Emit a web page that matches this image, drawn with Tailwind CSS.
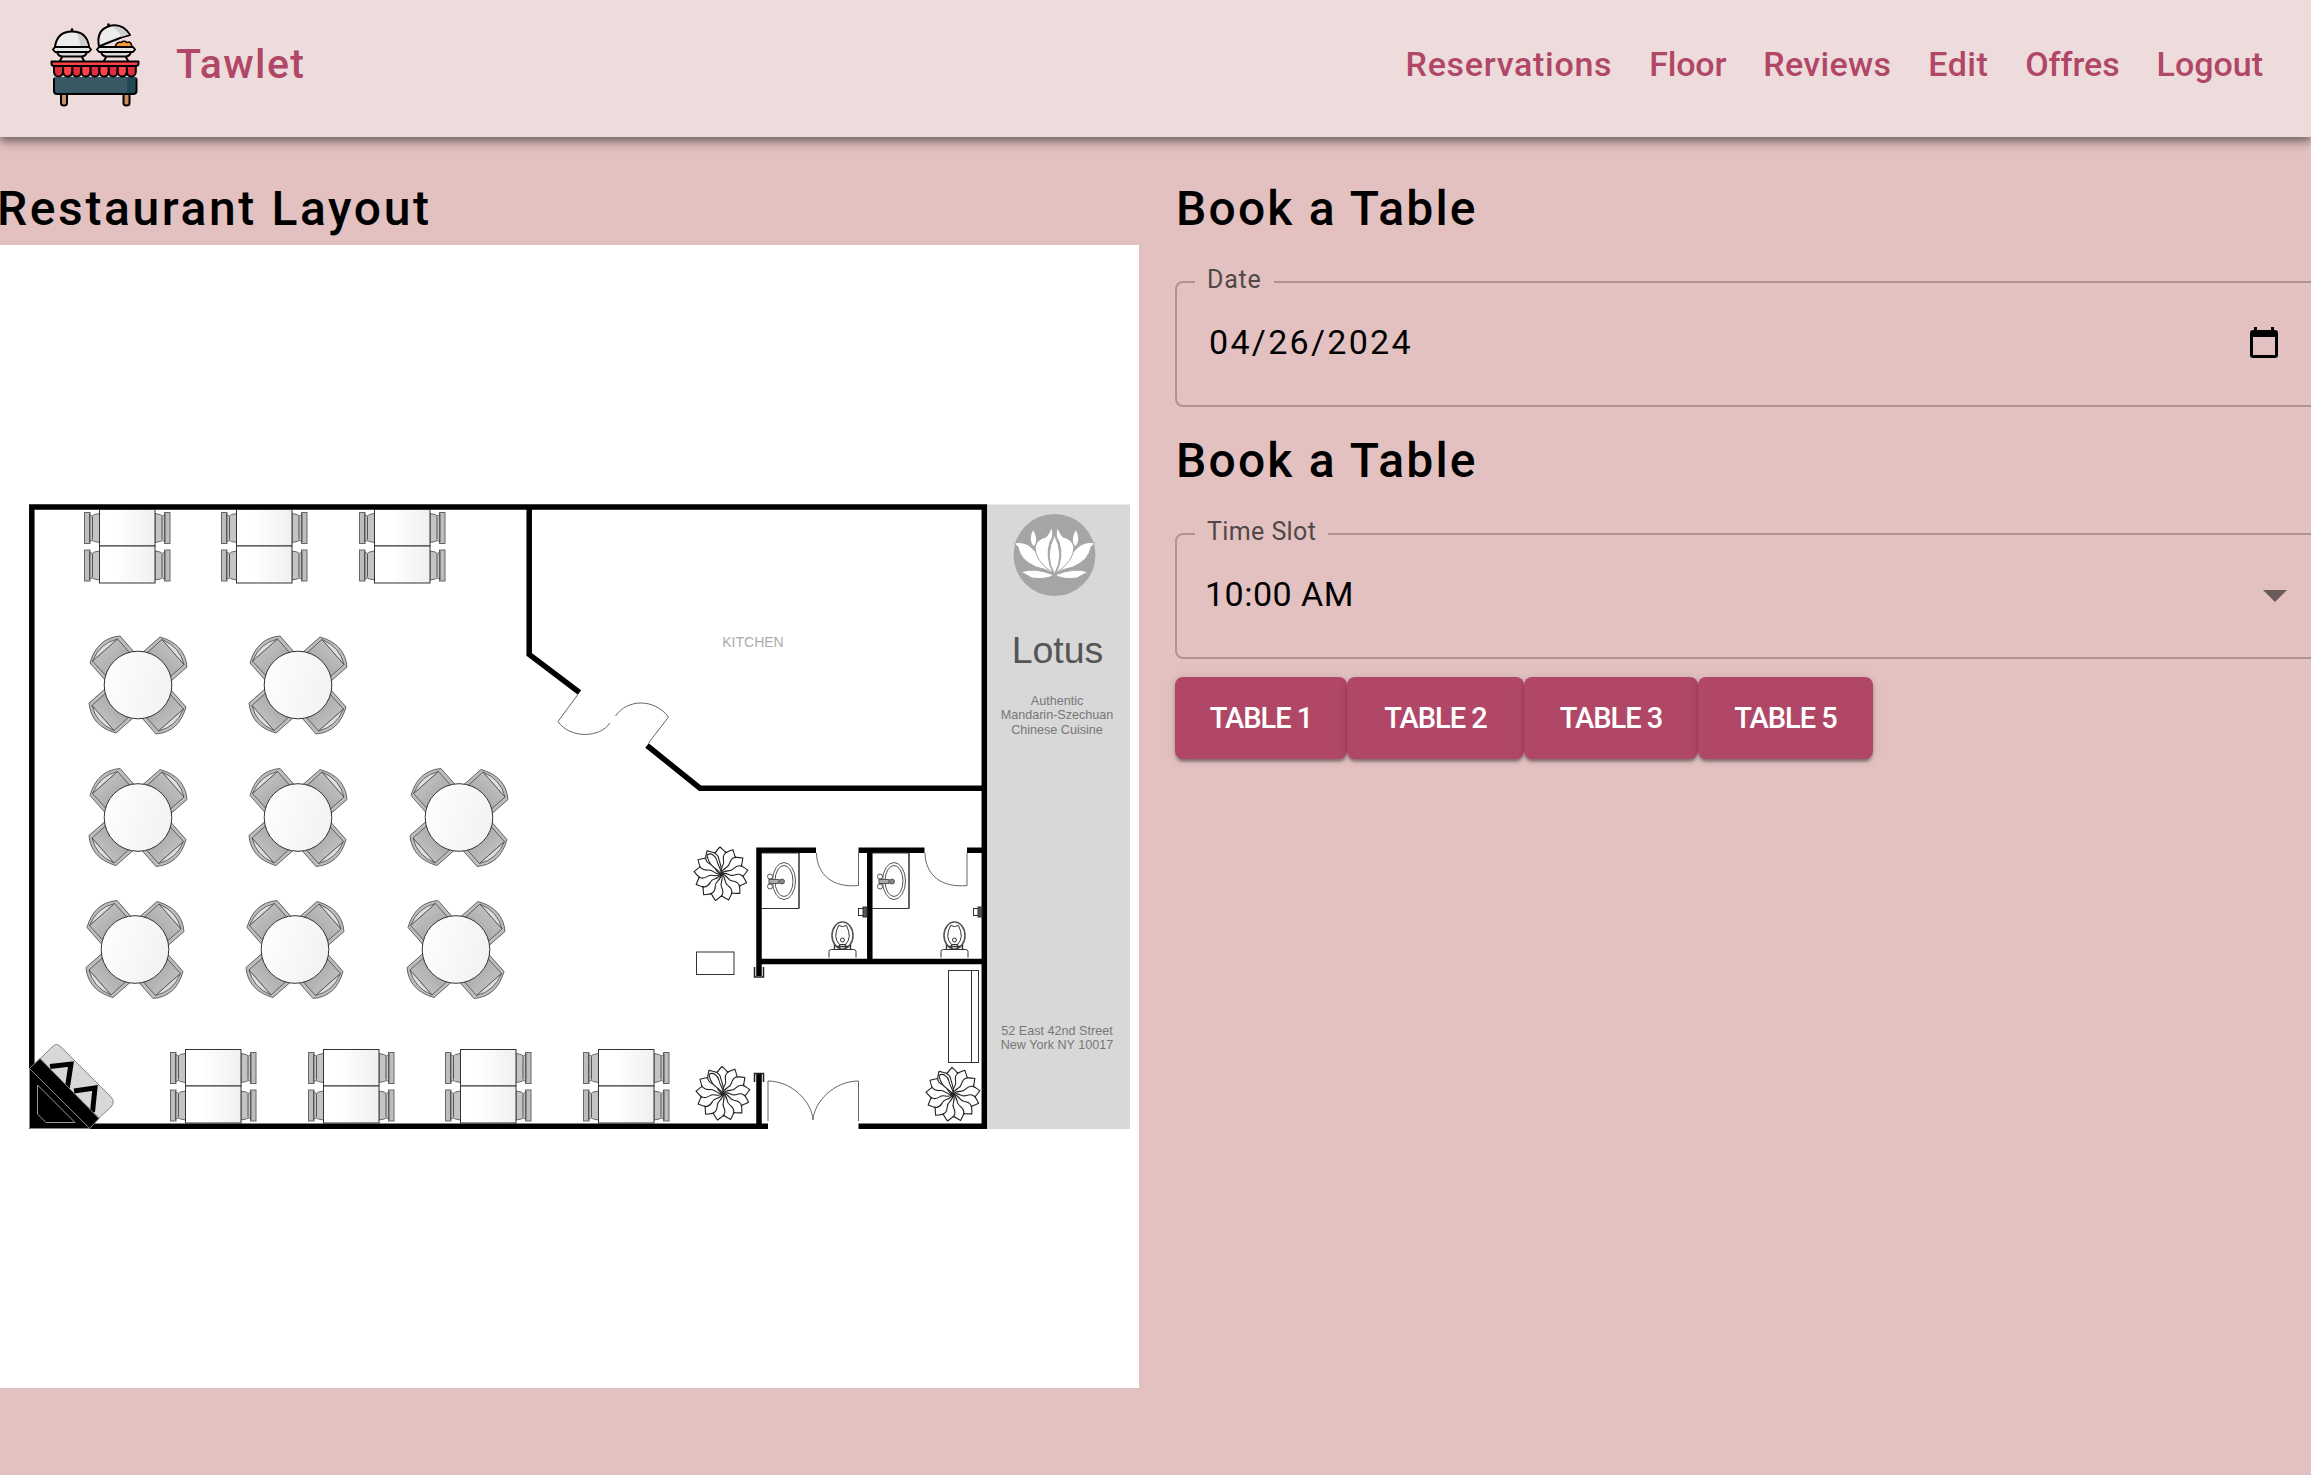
<!DOCTYPE html>
<html lang="en">
<head>
<meta charset="utf-8">
<title>Tawlet</title>
<script src="https://cdn.jsdelivr.net/npm/@tailwindcss/browser@4"></script>
</head>
<body class="flex h-screen flex-col overflow-hidden bg-[#e3c1c1] font-['Roboto',sans-serif] font-medium text-black">
<header class="relative z-10 flex h-[137px] shrink-0 items-center bg-[#eedcdc] pr-[48px] pl-[50px] text-[#b14767] shadow-[0_3px_6px_-1px_rgba(0,0,0,0.2),0_6px_8px_rgba(0,0,0,0.24),0_2px_15px_rgba(0,0,0,0.2)]">
  <svg class="-mt-[7px] h-[90px] w-[90px] shrink-0" viewBox="50 20 90 90" fill="none" stroke="#000" stroke-width="2" stroke-linejoin="round" stroke-linecap="round">
    <path d="M72 29.500v2" stroke-width="2.500"/>
    <path d="M55 47Q57 31.500 72 31.500T89 47z" fill="#ececec"/>
    <path d="M76 33Q80 39 80 46H88Q86 35 76 33z" fill="#cfcfcf" stroke="none"/>
    <path d="M53 49.500L55 47H89L91 49.500L89 52H55z" fill="#e6e6e6"/>
    <path d="M57 52Q58 56 62 56.500H82Q86 56 87 52z" fill="#dcdcdc"/>
    <path d="M62 57L60 61M82 57L84 61"/>
    <path d="M108.500 24.500v2.500" stroke-width="2.500"/>
    <path d="M115 47Q117 41 121 42.500Q124 40 127 42.500Q131 40.500 132 47z" fill="#ff9838" stroke-width="1.500"/>
    <path d="M99 46.500Q96 31 108 26.500Q122 22 130 35Q121 37 115 40Q107 43 99 46.500z" fill="#ececec"/>
    <path d="M113 27Q120 32 121 37L129 34.500Q123 26 113 27z" fill="#cfcfcf" stroke="none"/>
    <path d="M97 49.500L99 47H133L135 49.500L133 52H99z" fill="#e6e6e6"/>
    <path d="M101 52Q102 56 106 56.500H126Q130 56 131 52z" fill="#dcdcdc"/>
    <path d="M106 57L104 61M126 57L128 61"/>
    <path d="M61 94V103Q61 105.500 64 105.500T67 103V94zM123.500 94V103Q123.500 105.500 126.500 105.500T129.500 103V94z" fill="#c98e62"/>
    <path d="M54 77V91Q54 94 57 94H133Q136.500 94 136.500 91V77z" fill="#385963" stroke="none"/>
    <path d="M127 77H135.500V90Q135.500 93 133 93H127z" fill="#1f4854" stroke="none"/>
    <path d="M54 79V91Q54 94 57 94H133Q136.500 94 136.500 91V79"/>
    <g fill="#e22d3d"><path id="sc" d="M54 66V72Q54.500 76.500 58.500 76.500T63 72V66z"/><use href="#sc" x="18.200"/><use href="#sc" x="36.400"/><use href="#sc" x="54.600"/><use href="#sc" x="72.800"/></g>
    <g fill="#ff4148"><path id="sd" d="M63.100 66V72Q63.600 76.500 67.600 76.500T72.200 72V66z"/><use href="#sd" x="18.200"/><use href="#sd" x="36.400"/><use href="#sd" x="54.600"/></g>
    <path d="M51.500 61.500H138.500V64Q138 66 136 66H54Q52 66 51.500 64z" fill="#ff4148"/>
  </svg>
  <span class="ml-9 -mt-[7px] text-[41px] tracking-[1.4px]">Tawlet</span>
  <nav class="ml-auto -mt-[10px] flex gap-[37px] text-[34px] leading-none">
    <a class="tracking-[0.7px]">Reservations</a>
    <a class="tracking-[-0.2px]">Floor</a>
    <a class="tracking-[0.3px]">Reviews</a>
    <a class="tracking-[0.5px]">Edit</a>
    <a class="tracking-[-0.1px]">Offres</a>
    <a class="tracking-[0px]">Logout</a>
  </nav>
</header>
<main class="flex gap-9 pt-[42px]">
  <section class="w-[1139px] shrink-0">
    <h1 class="-ml-[3px] pt-px text-[48px] leading-[58px] tracking-[2.6px]">Restaurant Layout</h1>
    <svg class="mt-[7px] h-[1143px] w-[1139px] bg-white font-['Liberation_Sans',Arial,sans-serif] font-normal" viewBox="0 245 1139 1143" fill="none" stroke="#333" stroke-width="1">
      <defs>
        <linearGradient id="tb"><stop offset="0.300" stop-color="#fff"/><stop offset="1" stop-color="#f0f0f0"/></linearGradient>
        <linearGradient id="rt" x2="1" y2="0.300"><stop offset="0" stop-color="#fff"/><stop offset="1" stop-color="#f3f3f3"/></linearGradient>
        <linearGradient id="cs" x2="1" y2="1"><stop offset="0" stop-color="#cdcdcd"/><stop offset="1" stop-color="#9c9c9c"/></linearGradient>
        <g id="seat" stroke="#666">
          <path d="M-10 2Q-7 5 -5 2L0 1V30L-5 29Q-7 27 -10 29z" fill="#c4c4c4"/>
          <rect x="-15" y="0" width="5.500" height="31" fill="#bdbdbd"/>
          <path d="M-7 4V27M-10 1V30" stroke="#555"/>
        </g>
        <g id="pair">
          <use href="#seat" y="3"/><use href="#seat" y="40.500"/>
          <use href="#seat" transform="translate(55.500 3) scale(-1 1)"/><use href="#seat" transform="translate(55.500 40.500) scale(-1 1)"/>
          <rect width="55.500" height="36.500" fill="url(#tb)"/><rect y="36.500" width="55.500" height="37" fill="url(#tb)"/>
        </g>
        <g id="arm" stroke="#555" stroke-width="0.900">
          <path d="M-33 -5L-48 -22Q-41 -47 -18 -49L-4 -33z" fill="#bdbdbd"/>
          <path d="M-45.500 -24L-20.500 -46L-8 -32L-32 -9z" fill="url(#cs)"/>
          <path d="M-45.500 -24Q-38 -42 -20.500 -46z" fill="#dedede"/>
        </g>
        <g id="round">
          <use href="#arm"/><use href="#arm" transform="rotate(90)"/><use href="#arm" transform="rotate(180)"/><use href="#arm" transform="rotate(270)"/>
          <circle r="33.800" fill="url(#rt)" stroke="#333"/>
        </g>
        <path id="leaf" d="M0 0C-5 -5 0 -9 -4 -13C-8 -18 -7 -21 -1 -27C2 -24 6 -22 6 -17C4 -10 5 -6 0 0z" fill="#fff"/>
        <g id="plant" stroke="#222" stroke-width="1.100">
          <circle r="22.500"/>
          <use href="#leaf"/><use href="#leaf" transform="rotate(28)"/><use href="#leaf" transform="rotate(56)"/><use href="#leaf" transform="rotate(84)"/><use href="#leaf" transform="rotate(111)"/><use href="#leaf" transform="rotate(138)"/><use href="#leaf" transform="rotate(166)"/><use href="#leaf" transform="rotate(194)"/><use href="#leaf" transform="rotate(222)"/><use href="#leaf" transform="rotate(249)"/><use href="#leaf" transform="rotate(277)"/><use href="#leaf" transform="rotate(304)"/><use href="#leaf" transform="rotate(331)"/>
          <path d="M0 0C-3 -6 -12 -6 -14 -19C-10 -22 -5 -18 -4 -13C-3 -8 1 -4 0 0z" fill="#fff"/>
        </g>
        <g id="bath">
          <path d="M0 0H37V55.500H0M37 0V55.500"/>
          <g stroke="#555"><ellipse cx="22" cy="28" rx="11.500" ry="18.500"/><ellipse cx="22" cy="28" rx="9" ry="15.500"/><circle cx="20" cy="28.500" r="2.500" fill="#888"/><rect x="7" y="26.500" width="10" height="4" fill="#aaa"/><circle cx="8" cy="23.500" r="2.500"/><circle cx="8" cy="33.500" r="2.500"/></g>
        </g>
        <g id="wc">
          <ellipse rx="10.500" ry="13.500" stroke="#555" stroke-width="1.600"/><path d="M-4 -10Q0 -8 4 -10Q10 2 3 9H-3Q-10 2 -4 -10z"/><circle cy="4.500" r="2"/>
          <path d="M-8 9V14M8 9V14M-6 11H6M-3 9V13M3 9V13" stroke-width="1.400"/>
          <path d="M-13.500 22V16Q-13.500 14 -11 14H11Q13.500 14 13.500 16V22"/>
        </g>
      </defs>
      <rect x="987" y="504.500" width="143" height="624.500" fill="#d8d8d8" stroke="none"/>
      <g stroke="#000" stroke-width="5.500">
        <path d="M768 1126.200H31.800V507H984.300V1126.200H858.500"/>
        <path d="M529.200 507V654.500L579.500 692.500M647 745.500L700 788.200H984"/>
        <path d="M759 976V850.200H816M858.500 850.200H924.500M967 850.200H984M869.800 850V961.500M759 961.500H984M759 1074V1124"/>
      </g>
      <g stroke="#666">
        <path d="M577.500 695L558 721.500C570 739 600 738 610 723M615.500 716C627 699 654 698 668.500 717L648.500 743"/>
        <path d="M816.500 853C817 875 833 888 858.500 885.500V853M925 853C925.500 875 941 888 967 885.500V853"/>
        <path d="M768 1121V1081C792 1081 812 1102 813 1120C814 1102 834 1081 858.500 1081V1121"/>
        <path d="M754.500 967V977H763.500V967M754.500 1082V1073.500H763.500V1082" stroke="#222" stroke-width="1.500"/>
      </g>
      <use href="#pair" x="99.500" y="509.500"/><use href="#pair" x="236.500" y="509.500"/><use href="#pair" x="374.500" y="509.500"/>
      <use href="#pair" x="185.500" y="1049.500"/><use href="#pair" x="323.500" y="1049.500"/><use href="#pair" x="460.500" y="1049.500"/><use href="#pair" x="598.500" y="1049.500"/>
      <use href="#round" x="138" y="685"/><use href="#round" x="298" y="685"/>
      <use href="#round" x="138" y="817.500"/><use href="#round" x="298" y="817.500"/><use href="#round" x="459" y="817.500"/>
      <use href="#round" x="135" y="949.500"/><use href="#round" x="295" y="949.500"/><use href="#round" x="456" y="949.500"/>
      <use href="#bath" x="762" y="853"/><use href="#bath" x="872" y="853"/>
      <use href="#wc" x="842.500" y="935.500"/><use href="#wc" x="954.500" y="935.500"/>
      <rect x="858.500" y="908.500" width="5.500" height="7"/><rect x="863" y="907" width="4" height="10" fill="#555"/>
      <rect x="973.500" y="908.500" width="5.500" height="7"/><rect x="978" y="907" width="4" height="10" fill="#555"/>
      <rect x="696.500" y="952" width="37.500" height="22.500"/>
      <rect x="948.500" y="970.500" width="30" height="92"/><path d="M971.500 970V1062.500"/>
      <use href="#plant" x="721" y="874"/><use href="#plant" x="723" y="1093.500"/><use href="#plant" x="953" y="1094.500"/>
      <path d="M40 1059L52 1047Q56.500 1042 61 1047L111 1097Q115.500 1102 111 1107L99 1118z" fill="#d8d8d8" stroke="#888"/>
      <path d="M50 1066.500L71 1064L67 1090M74 1091L95 1088L92.500 1112" stroke="#000" stroke-width="5"/>
      <path d="M29.500 1068V1128.500H90z" fill="#000" stroke="#888"/>
      <path d="M40 1058.500L99 1118.500L89.700 1128.500L29.500 1068.500z" fill="#000" stroke="#888"/>
      <path d="M37.500 1085L75 1122.500H46L37.500 1114z" stroke="#999"/>
      <circle cx="1054.500" cy="555" r="41" fill="#a5a5a5" stroke="none"/>
      <g fill="#fff" stroke="#a5a5a5" stroke-width="1">
        <path id="pt" d="M1054 574Q1047 569 1036 567Q1020 560 1018 547L1014 543Q1024 541 1031 547Q1037 552 1040 560Q1047 568 1054 574z"/>
        <path id="pu" d="M1053 573Q1035 561 1035 547Q1037 539 1046 537Q1050 533 1051 527Q1055 535 1050 542Q1045 557 1053 573z"/>
        <path id="pv" d="M1054 575Q1046 580 1032 578L1021 572Q1034 567 1054 575z"/>
        <path id="pw" d="M1033 529Q1040 540 1034 547Q1027 541 1033 529z"/>
        <use href="#pt" transform="translate(2109 0) scale(-1 1)"/><use href="#pu" transform="translate(2109 0) scale(-1 1)"/><use href="#pv" transform="translate(2109 0) scale(-1 1)"/><use href="#pw" transform="translate(2109 0) scale(-1 1)"/>
        <path d="M1054.500 574Q1044 556 1054.500 535Q1065 556 1054.500 574z"/>
      </g>
      <g stroke="none" text-anchor="middle" fill="#777" font-size="12.600">
        <text x="753" y="647" font-size="14" fill="#aaa">KITCHEN</text>
        <text x="1057.500" y="663" font-size="37.500" fill="#555">Lotus</text>
        <text x="1057" y="705">Authentic</text><text x="1057" y="719.300">Mandarin-Szechuan</text><text x="1057" y="733.500">Chinese Cuisine</text>
        <text x="1057" y="1034.500">52 East 42nd Street</text><text x="1057" y="1048.800">New York NY 10017</text>
      </g>
    </svg>
  </section>
  <section class="w-[1200px] shrink-0">
    <h2 class="pt-px pl-px text-[48px] leading-[58px] tracking-[2.2px]">Book a Table</h2>
    <fieldset class="mt-[28px] h-[141px] rounded-lg border-2 border-[#b09292] pl-[18px] font-normal">
      <legend class="px-3 pb-1 text-[25px] leading-[27px] tracking-[0.8px] text-[#504848]">Date</legend>
      <div class="flex items-center pt-[21px] pl-[14px] text-[34px] leading-[48px]">
        <span class="w-[1039px] tracking-[2.3px]">04/26/2024</span>
        <svg class="h-8 w-8" viewBox="0 0 32 32"><path d="M6 1h3v3h14V1h3v3h1q3 0 3 3v22q0 3-3 3H5q-3 0-3-3V7q0-3 3-3h1zM5 11v18h22V11z" fill="#000" fill-rule="evenodd"/></svg>
      </div>
    </fieldset>
    <h2 class="mt-6 pt-px pl-px text-[48px] leading-[58px] tracking-[2.2px]">Book a Table</h2>
    <fieldset class="mt-[28px] h-[141px] rounded-lg border-2 border-[#b09292] pl-[18px] font-normal">
      <legend class="px-3 pb-1 text-[25px] leading-[27px] tracking-[0.4px] text-[#504848]">Time Slot</legend>
      <div class="flex items-center pt-[21px] pl-[10px] text-[34px] leading-[48px]">
        <span class="w-[1058px] tracking-[0.5px]">10:00 AM</span>
        <svg class="mt-1 h-3 w-6" viewBox="0 0 24 12"><path d="M0 0h24L12 12z" fill="#6a5a5a"/></svg>
      </div>
    </fieldset>
    <div class="mt-[18px] flex h-[82px] text-[29px] tracking-[-1px] text-white">
      <button class="w-[172px] rounded-lg bg-[#b14767] pt-0.5 shadow-[0_4px_3px_-2px_rgba(0,0,0,0.25),0_3px_3px_rgba(0,0,0,0.18),0_1px_8px_rgba(0,0,0,0.14)]">TABLE 1</button>
      <button class="w-[177px] rounded-lg bg-[#b14767] pt-0.5 shadow-[0_4px_3px_-2px_rgba(0,0,0,0.25),0_3px_3px_rgba(0,0,0,0.18),0_1px_8px_rgba(0,0,0,0.14)]">TABLE 2</button>
      <button class="w-[174px] rounded-lg bg-[#b14767] pt-0.5 shadow-[0_4px_3px_-2px_rgba(0,0,0,0.25),0_3px_3px_rgba(0,0,0,0.18),0_1px_8px_rgba(0,0,0,0.14)]">TABLE 3</button>
      <button class="w-[175px] rounded-lg bg-[#b14767] pt-0.5 shadow-[0_4px_3px_-2px_rgba(0,0,0,0.25),0_3px_3px_rgba(0,0,0,0.18),0_1px_8px_rgba(0,0,0,0.14)]">TABLE 5</button>
    </div>
  </section>
</main>
</body>
</html>
